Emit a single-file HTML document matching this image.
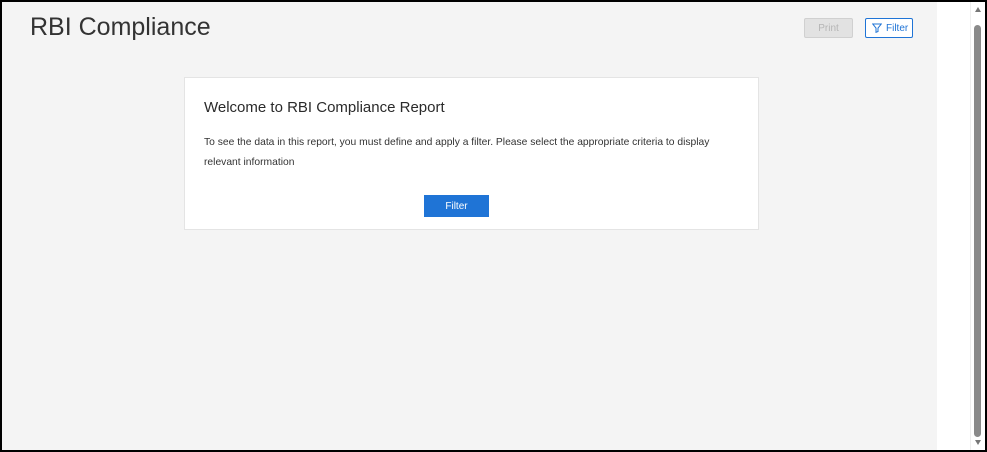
<!DOCTYPE html>
<html><head><style>
*{margin:0;padding:0;box-sizing:border-box}
body{width:987px;height:452px;background:#000;font-family:"Liberation Sans",sans-serif;position:relative;overflow:hidden}
.frame{position:absolute;left:2px;top:2px;width:983px;height:448px;background:#fff}
.gray{position:absolute;left:0;top:0;width:935px;height:448px;background:#f4f4f4}
.sb{position:absolute;left:968px;top:0;width:15px;height:448px;background:#fff;border-left:1px solid #eee}
.thumb{position:absolute;left:974px;top:25px;width:7px;height:412px;background:#8a8a8a;border-radius:4px}
h1{position:absolute;left:30px;top:13px;font-size:25px;font-weight:400;color:#333}
.print{position:absolute;left:804px;top:18px;width:49px;height:20px;background:#e2e2e2;border:1px solid #d0d0d0;color:#b5b5b5;font-size:10px;text-align:center;line-height:19px;border-radius:2px}
.filt{position:absolute;left:865px;top:18px;width:48px;height:20px;border:1.5px solid #1f74d6;color:#1f74d6;font-size:10px;line-height:19px;border-radius:2px;background:#fff;padding-left:20px}
.filt svg{position:absolute;left:6px;top:4px}
.card{position:absolute;left:184px;top:77px;width:575px;height:153px;background:#fff;border:1px solid #e4e4e4}
.card h2{position:absolute;left:19px;top:21px;font-size:15px;font-weight:400;color:#2a2a2a}
.card p{position:absolute;left:19px;top:55px;width:545px;font-size:10.3px;color:#333;line-height:19.5px}
.btn{position:absolute;left:239px;top:117px;width:65px;height:22px;background:#1f74d6;color:#fff;font-size:10px;text-align:center;line-height:23px}
</style></head><body>
<div class="frame">
<div class="gray"></div>
<div class="sb"></div>
</div>
<div style="position:absolute;left:975px;top:7px;width:0;height:0;border-left:3px solid transparent;border-right:3px solid transparent;border-bottom:5px solid #777"></div>
<div style="position:absolute;left:975px;top:440px;width:0;height:0;border-left:3px solid transparent;border-right:3px solid transparent;border-top:5px solid #777"></div>
<div class="thumb"></div>
<h1>RBI Compliance</h1>
<div class="print">Print</div>
<div class="filt"><svg width="10" height="10" viewBox="0 0 10 10"><path d="M0.7 1h8.6L6 5v3.5L4 9.3V5z" fill="none" stroke="#1f74d6" stroke-width="1"/></svg>Filter</div>
<div class="card">
<h2>Welcome to RBI Compliance Report</h2>
<p>To see the data in this report, you must define and apply a filter. Please select the appropriate criteria to display<br>relevant information</p>
<div class="btn">Filter</div>
</div>
</body></html>
